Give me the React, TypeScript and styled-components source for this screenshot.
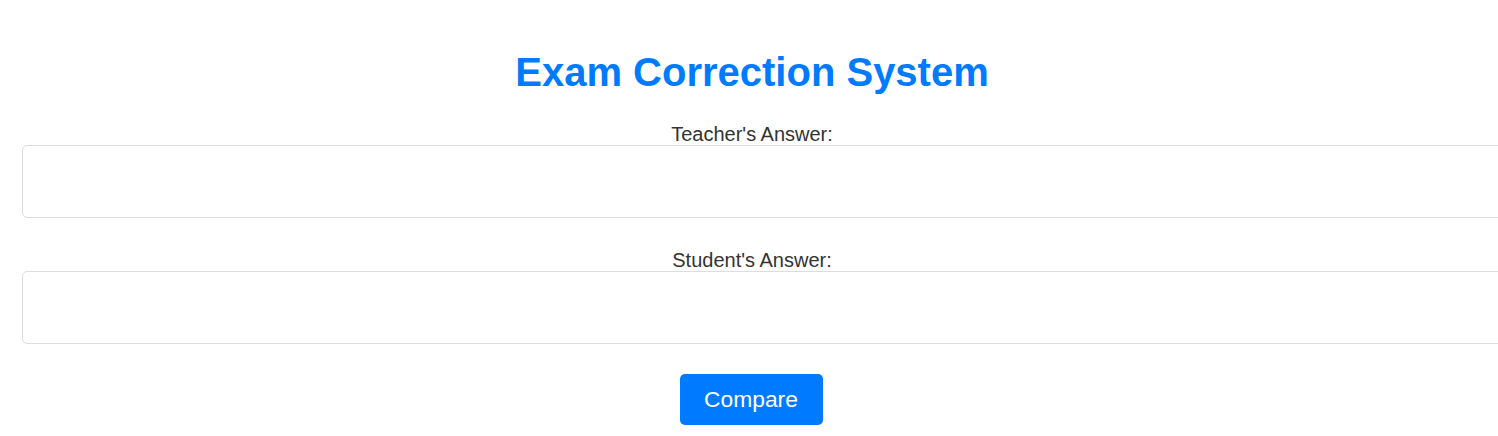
import React from "react";
import styled, { createGlobalStyle } from "styled-components";

const GlobalStyle = createGlobalStyle`
  html, body {
    margin: 0;
    padding: 0;
    background: #ffffff;
    overflow-x: hidden;
  }
  body {
    font-family: "Liberation Sans", Arial, sans-serif;
  }
`;

const Container = styled.div`
  padding: 24px 16px 12px 22px;
  text-align: center;
`;

const Title = styled.h1`
  margin: 25px 0 28px;
  font-size: 40px;
  font-weight: bold;
  color: #007bff;
  line-height: 46px;
`;

const Field = styled.div`
  margin-bottom: 31px;
`;

const Label = styled.label`
  display: block;
  font-size: 20px;
  line-height: 22px;
  color: #333333;
`;

const TextArea = styled.textarea`
  display: block;
  width: 100%;
  height: 51px;
  padding: 10px;
  margin: 0;
  border: 1px solid #dddddd;
  border-radius: 5px;
  font-family: "Liberation Sans", Arial, sans-serif;
  font-size: 16px;
  resize: none;
  box-sizing: content-box;
  outline: none;
`;

const Button = styled.button`
  display: inline-block;
  margin: -1px 2px 0 0;
  height: 51px;
  width: 143px;
  padding: 0;
  border: none;
  border-radius: 5px;
  background: #007bff;
  color: #ffffff;
  font-family: "Liberation Sans", Arial, sans-serif;
  font-size: 22.8px;
  cursor: pointer;
`;

export default function App() {
  return (
    <>
      <GlobalStyle />
      <Container>
        <Title>Exam Correction System</Title>
        <Field>
          <Label htmlFor="teacher">Teacher's Answer:</Label>
          <TextArea id="teacher" />
        </Field>
        <Field>
          <Label htmlFor="student">Student's Answer:</Label>
          <TextArea id="student" />
        </Field>
        <Button>Compare</Button>
      </Container>
    </>
  );
}
